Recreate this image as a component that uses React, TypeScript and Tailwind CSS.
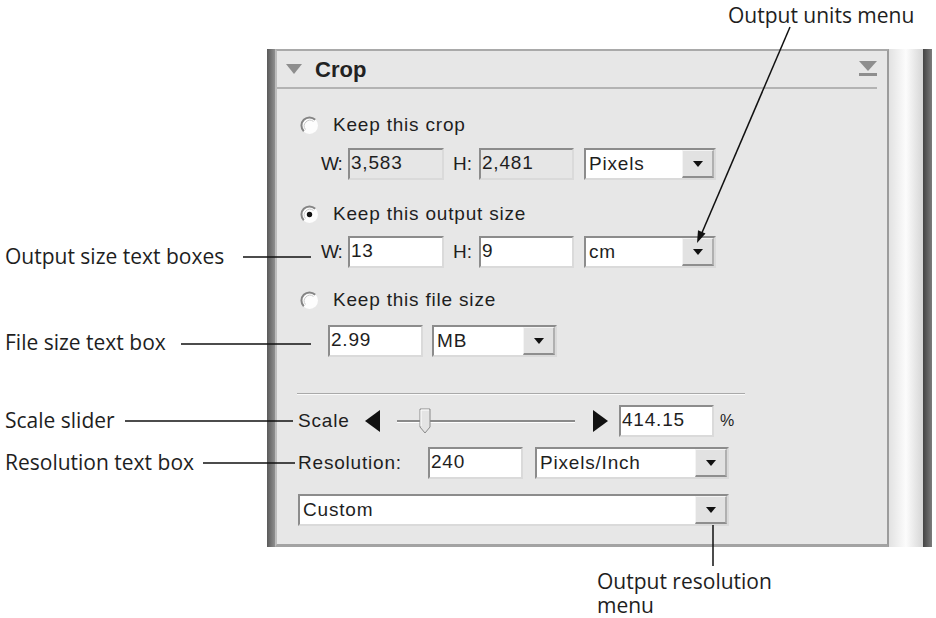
import React from "react";

const Radio = ({ checked = false }: { checked?: boolean }) => (
  <svg width="19" height="19" viewBox="0 0 19 19" className="shrink-0">
    <circle cx="9.5" cy="9.5" r="8.5" fill="#fdfdfd" />
    <path d="M15.2 3.8 A8 8 0 0 0 3.8 15.2" fill="none" stroke="#858585" strokeWidth="2" />
    <path d="M13.5 5.5 A5.7 5.7 0 0 0 5.5 13.5" fill="none" stroke="#c9c9c9" strokeWidth="1" />
    {checked && <circle cx="9.5" cy="9.5" r="2.7" fill="#111" />}
  </svg>
);

const Arrow = () => (
  <svg width="10" height="6" viewBox="0 0 10 6">
    <path d="M0 0 H10 L5 6 Z" fill="#111" />
  </svg>
);

const Box = ({ value, className, disabled = false }: { value: string; className: string; disabled?: boolean }) => (
  <div
    className={
      "h-full flex items-start pt-[1px] pl-[1px] border-t-2 border-l-2 border-t-[#8c8c8c] border-l-[#8c8c8c] border-b-2 border-r-2 border-b-[#dadada] border-r-[#dadada] " +
      (disabled ? "bg-[#e6e6e6] " : "bg-white ") +
      className
    }
  >
    <span className="leading-[24px]">{value}</span>
  </div>
);

const Drop = ({ value, className }: { value: string; className: string }) => (
  <div
    className={
      "h-full flex border-t-2 border-l-2 border-t-[#8c8c8c] border-l-[#8c8c8c] border-b-2 border-r-2 border-b-[#dadada] border-r-[#dadada] bg-white " +
      className
    }
  >
    <span className="flex-1 pl-[3px] pt-[2px] leading-[24px]">{value}</span>
    <div className="w-[32px] flex items-center justify-center bg-[#e2e2e2] border-t border-l border-t-[#f4f4f4] border-l-[#f4f4f4] border-b-2 border-r-2 border-b-[#8e8e8e] border-r-[#b0b0b0]">
      <Arrow />
    </div>
  </div>
);

export default function App() {
  return (
    <div className="relative w-[936px] h-[618px] bg-white overflow-hidden pl-[267px] pt-[49px] text-[#1e1e1e]">
      {/* Panel */}
      <div className="flex w-[665px] h-[498px] font-['Liberation_Sans',Arial,sans-serif] text-[19px] tracking-[0.8px]">
        <div className="w-[8px] bg-linear-to-r from-[#5a5a5a] to-[#8f8f8f]" />
        <div className="w-[614px] flex flex-col bg-[#e7e7e7] border-t-2 border-r-2 border-b-[3px] border-l-2 border-t-[#a9a9a9] border-r-[#9c9c9c] border-b-[#a3a3a3] border-l-[#bdbdbd]">
          {/* Header */}
          <div className="h-[36px] flex items-center pl-[9px] pr-[9px]">
            <svg width="16" height="10" viewBox="0 0 16 10">
              <path d="M0 0 H16 L8 10 Z" fill="#8e8e8e" />
            </svg>
            <span className="ml-[13px] font-bold text-[22px] tracking-[0px] text-[#222]">Crop</span>
            <div className="flex-1" />
            <svg width="20" height="18" viewBox="0 0 20 18">
              <path d="M1 1 H19 L10 11 Z" fill="#8e8e8e" />
              <rect x="1" y="13" width="18" height="3" fill="#8e8e8e" />
            </svg>
          </div>
          <div className="h-[2px] mr-[10px] bg-[#b3b3b3]" />

          {/* Keep this crop */}
          <div className="mt-[21px] h-[30px] flex items-center pl-[23px] gap-[14px]">
            <Radio />
            <span>Keep this crop</span>
          </div>
          <div className="mt-[8px] h-[32px] flex items-center pl-[44px]">
            <span className="w-[27px] tracking-[-1px]">W:</span>
            <Box value="3,583" className="w-[96px]" disabled />
            <span className="ml-[9px] w-[26px] tracking-[0px]">H:</span>
            <Box value="2,481" className="w-[95px]" disabled />
            <Drop value="Pixels" className="ml-[10px] w-[132px]" />
          </div>

          {/* Keep this output size */}
          <div className="mt-[19px] h-[30px] flex items-center pl-[23px] gap-[14px]">
            <Radio checked />
            <span>Keep this output size</span>
          </div>
          <div className="mt-[7px] h-[32px] flex items-center pl-[44px]">
            <span className="w-[27px] tracking-[-1px]">W:</span>
            <Box value="13" className="w-[96px]" />
            <span className="ml-[9px] w-[26px] tracking-[0px]">H:</span>
            <Box value="9" className="w-[95px]" />
            <Drop value="cm" className="ml-[10px] w-[132px]" />
          </div>

          {/* Keep this file size */}
          <div className="mt-[17px] h-[30px] flex items-center pl-[23px] gap-[14px]">
            <Radio />
            <span>Keep this file size</span>
          </div>
          <div className="mt-[10px] h-[32px] flex items-center pl-[51px]">
            <Box value="2.99" className="w-[95px]" />
            <Drop value="MB" className="ml-[9px] w-[125px]" />
          </div>

          {/* Separator */}
          <div className="mt-[36px] ml-[20px] w-[448px] border-t border-b border-t-[#a9a9a9] border-b-[#fafafa]" />

          {/* Scale */}
          <div className="mt-[10px] h-[32px] flex items-center pl-[21px]">
            <span className="w-[67px]">Scale</span>
            <svg width="15" height="22" viewBox="0 0 15 22">
              <path d="M15 0 V22 L0 11 Z" fill="#111" />
            </svg>
            <div className="relative ml-[17px] w-[178px] h-full flex items-center">
              <div className="w-full h-0 border-t-2 border-b border-t-[#8a8a8a] border-b-[#ffffff]" />
              <svg className="absolute left-[22px] top-[3px]" width="12" height="26" viewBox="0 0 12 26">
                <path d="M1 1 H11 V19 L6 25 L1 19 Z" fill="#e4e4e4" stroke="#8a8a8a" strokeWidth="1" />
                <path d="M2 2 H10 M2 2 V18" stroke="#ffffff" strokeWidth="1" fill="none" />
              </svg>
            </div>
            <svg className="ml-[18px]" width="15" height="22" viewBox="0 0 15 22">
              <path d="M0 0 V22 L15 11 Z" fill="#111" />
            </svg>
            <Box value="414.15" className="ml-[11px] w-[95px]" />
            <span className="ml-[6px] text-[16px]">%</span>
          </div>

          {/* Resolution */}
          <div className="mt-[10px] h-[32px] flex items-center pl-[21px]">
            <span className="w-[130px]">Resolution:</span>
            <Box value="240" className="w-[95px]" />
            <Drop value="Pixels/Inch" className="ml-[12px] w-[194px]" />
          </div>

          {/* Custom */}
          <div className="mt-[15px] h-[32px] flex items-center pl-[21px]">
            <Drop value="Custom" className="w-[431px]" />
          </div>
        </div>
        <div className="w-[34px] bg-linear-to-r from-[#e2e2e2] via-[#fcfcfc] to-[#d6d6d6]" />
        <div className="w-[9px] bg-linear-to-r from-[#444444] to-[#7c7c7c]" />
      </div>

      {/* Callout lines */}
      <svg className="absolute left-0 top-0 pointer-events-none" width="936" height="618" viewBox="0 0 936 618">
        <g stroke="#111" strokeWidth="1.5" fill="none">
          <line x1="790" y1="27" x2="701" y2="235" />
          <line x1="243" y1="257" x2="311" y2="257" />
          <line x1="181" y1="344" x2="311" y2="344" />
          <line x1="125" y1="421" x2="293" y2="421" />
          <line x1="203" y1="463" x2="295" y2="463" />
          <line x1="713" y1="525" x2="713" y2="566" />
        </g>
        <path d="M697 243 L705.5 233.5 L698 230.3 Z" fill="#111" />
      </svg>

      {/* Callout labels */}
      <div className="absolute left-0 top-0 w-[936px] h-[618px] pointer-events-none font-['Open_Sans','Noto_Sans',sans-serif] text-[21px] leading-[23px] text-[#1e1e1e] whitespace-nowrap">
        <div className="absolute left-[728px] top-[4px]">Output units menu</div>
        <div className="absolute left-[5px] top-[245px]">Output size text boxes</div>
        <div className="absolute left-[5px] top-[331px]">File size text box</div>
        <div className="absolute left-[5px] top-[409px]">Scale slider</div>
        <div className="absolute left-[5px] top-[451px]">Resolution text box</div>
        <div className="absolute left-[597px] top-[570px]">Output resolution</div>
        <div className="absolute left-[597px] top-[594px]">menu</div>
      </div>
    </div>
  );
}
